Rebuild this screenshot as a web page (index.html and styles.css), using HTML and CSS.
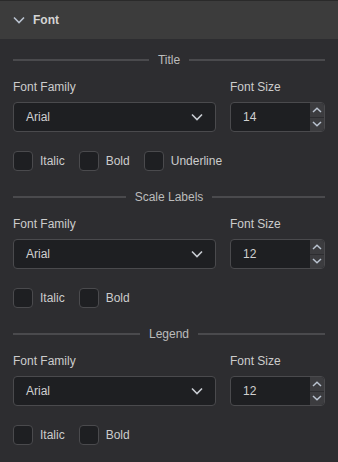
FILE: index.html
```html
<!DOCTYPE html>
<html lang="en">
  <head>
    <meta charset="UTF-8" />
    <title>Font</title>
    <link rel="stylesheet" href="styles.css">
  </head>
  <body>
    <div class="panel">
      <div class="panel-header">
        <svg class="caret" width="12" height="8" viewBox="0 0 12 8"><path d="M1 1.5 L6 6.5 L11 1.5" fill="none" stroke="#b9c2cf" stroke-width="1.6"/></svg>
        <span>Font</span>
      </div>

      <div class="group">
        <div class="group-title"><span>Title</span></div>
        <div class="row">
          <div class="field">
            <label>Font Family</label>
            <div class="select">
              <span>Arial</span>
              <svg width="12" height="8" viewBox="0 0 12 8"><path d="M1 1.5 L6 6.5 L11 1.5" fill="none" stroke="#c8ccd2" stroke-width="1.6"/></svg>
            </div>
          </div>
          <div class="field">
            <label>Font Size</label>
            <div class="number">
              <span class="value">14</span>
              <div class="spin">
                <div class="spin-btn"><svg width="10" height="6" viewBox="0 0 10 6"><path d="M1 5 L5 1.2 L9 5" fill="none" stroke="#b9c2cf" stroke-width="1.5"/></svg></div>
                <div class="spin-btn"><svg width="10" height="6" viewBox="0 0 10 6"><path d="M1 1 L5 4.8 L9 1" fill="none" stroke="#b9c2cf" stroke-width="1.5"/></svg></div>
              </div>
            </div>
          </div>
        </div>
        <div class="checks">
          <div class="check"><span class="box"></span>Italic</div>
          <div class="check"><span class="box"></span>Bold</div>
          <div class="check"><span class="box"></span>Underline</div>
        </div>
      </div>

      <div class="group">
        <div class="group-title"><span>Scale Labels</span></div>
        <div class="row">
          <div class="field">
            <label>Font Family</label>
            <div class="select">
              <span>Arial</span>
              <svg width="12" height="8" viewBox="0 0 12 8"><path d="M1 1.5 L6 6.5 L11 1.5" fill="none" stroke="#c8ccd2" stroke-width="1.6"/></svg>
            </div>
          </div>
          <div class="field">
            <label>Font Size</label>
            <div class="number">
              <span class="value">12</span>
              <div class="spin">
                <div class="spin-btn"><svg width="10" height="6" viewBox="0 0 10 6"><path d="M1 5 L5 1.2 L9 5" fill="none" stroke="#b9c2cf" stroke-width="1.5"/></svg></div>
                <div class="spin-btn"><svg width="10" height="6" viewBox="0 0 10 6"><path d="M1 1 L5 4.8 L9 1" fill="none" stroke="#b9c2cf" stroke-width="1.5"/></svg></div>
              </div>
            </div>
          </div>
        </div>
        <div class="checks">
          <div class="check"><span class="box"></span>Italic</div>
          <div class="check"><span class="box"></span>Bold</div>
        </div>
      </div>

      <div class="group">
        <div class="group-title"><span>Legend</span></div>
        <div class="row">
          <div class="field">
            <label>Font Family</label>
            <div class="select">
              <span>Arial</span>
              <svg width="12" height="8" viewBox="0 0 12 8"><path d="M1 1.5 L6 6.5 L11 1.5" fill="none" stroke="#c8ccd2" stroke-width="1.6"/></svg>
            </div>
          </div>
          <div class="field">
            <label>Font Size</label>
            <div class="number">
              <span class="value">12</span>
              <div class="spin">
                <div class="spin-btn"><svg width="10" height="6" viewBox="0 0 10 6"><path d="M1 5 L5 1.2 L9 5" fill="none" stroke="#b9c2cf" stroke-width="1.5"/></svg></div>
                <div class="spin-btn"><svg width="10" height="6" viewBox="0 0 10 6"><path d="M1 1 L5 4.8 L9 1" fill="none" stroke="#b9c2cf" stroke-width="1.5"/></svg></div>
              </div>
            </div>
          </div>
        </div>
        <div class="checks">
          <div class="check"><span class="box"></span>Italic</div>
          <div class="check"><span class="box"></span>Bold</div>
        </div>
      </div>
    </div>
  </body>
</html>
```

FILE: styles.css
```css
body {
  margin: 0;
  background-color: #2d2d30;
  font-family: "Liberation Sans", Arial, sans-serif;
  font-size: 12px;
  color: #cccccc;
}
.panel {
  width: 338px;
}
.panel-header {
  height: 39px;
  display: flex;
  align-items: center;
  gap: 8px;
  padding-left: 13px;
  background-color: #3c3c3c;
  border-top: 1px solid #2a2a2a;
  font-weight: bold;
  color: #d4d4d4;
  box-sizing: border-box;
}
.caret {
  margin-top: -1px;
}
.group {
  padding: 14px 13px 0;
}
.group + .group {
  padding-top: 19px;
}
.group-title {
  display: flex;
  align-items: center;
  gap: 9px;
  height: 14px;
  line-height: 14px;
  color: #bcbcbc;
}
.group-title::before,
.group-title::after {
  content: "";
  flex: 1;
  height: 2px;
  background-color: #4a4a4d;
}
.row {
  display: grid;
  grid-template-columns: 203px 95px;
  gap: 14px;
  margin-top: 13px;
}
.field label {
  display: block;
  height: 14px;
  line-height: 14px;
  margin-bottom: 8px;
}
.select {
  height: 30px;
  box-sizing: border-box;
  display: flex;
  align-items: center;
  justify-content: space-between;
  padding: 0 12px;
  background-color: #1e1f22;
  border: 1px solid #4a4a4d;
  border-radius: 4px;
  color: #d0d0d0;
}
.number {
  height: 30px;
  box-sizing: border-box;
  display: flex;
  background-color: #1e1f22;
  border: 1px solid #4a4a4d;
  border-radius: 4px;
  overflow: hidden;
  color: #d0d0d0;
}
.number .value {
  flex: 1;
  padding-left: 12px;
  line-height: 28px;
}
.spin {
  width: 14px;
  display: flex;
  flex-direction: column;
  gap: 1px;
  background-color: #2d2d30;
}
.spin-btn {
  flex: 1;
  display: flex;
  align-items: center;
  justify-content: center;
  background-color: #3c3c3f;
}
.checks {
  display: flex;
  gap: 14px;
  margin-top: 19px;
}
.check {
  display: flex;
  align-items: center;
  gap: 7px;
  height: 20px;
}
.box {
  width: 20px;
  height: 20px;
  box-sizing: border-box;
  background-color: #1e1f22;
  border: 1px solid #4a4a4d;
  border-radius: 4px;
}
```
